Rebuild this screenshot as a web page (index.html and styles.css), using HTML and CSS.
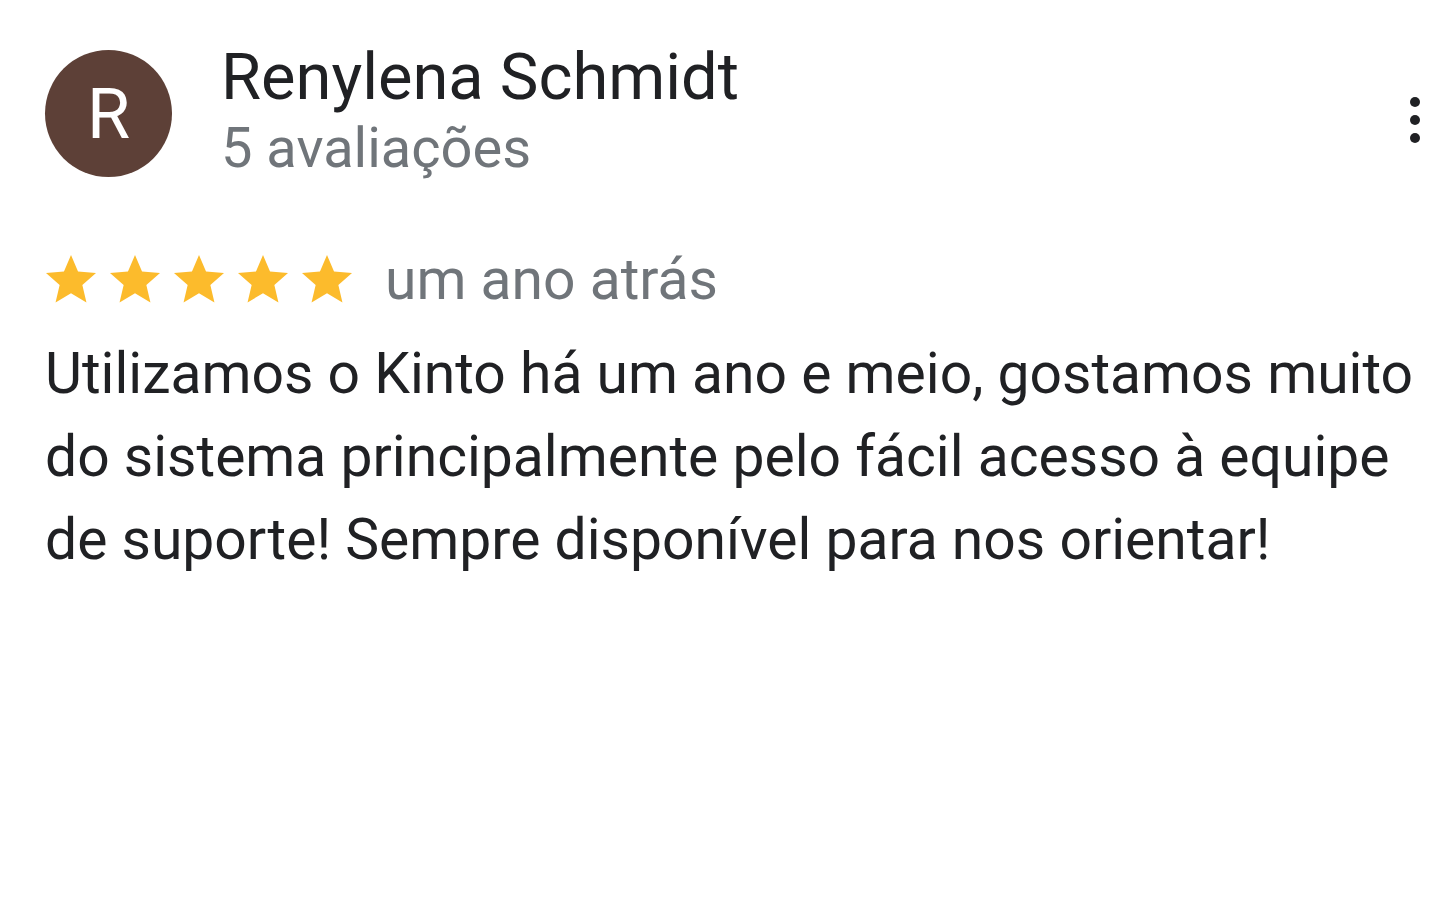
FILE: index.html
```html
<!DOCTYPE html>
<html lang="pt">
<head>
<meta charset="utf-8">
<link rel="stylesheet" href="styles.css">
</head>
<body>
<div class="review">
  <div class="header">
    <div class="avatar">R</div>
    <div class="author">
      <div class="name">Renylena Schmidt</div>
      <div class="count">5 avaliações</div>
    </div>
    <div class="menu">
      <span class="dot"></span><span class="dot"></span><span class="dot"></span>
    </div>
  </div>
  <div class="meta">
    <div class="stars">
      <svg class="star" viewBox="0 0 24 24"><path d="M12 17.27L18.18 21l-1.64-7.03L22 9.24l-7.19-.61L12 2 9.19 8.63 2 9.24l5.46 4.73L5.82 21z"/></svg>
      <svg class="star" viewBox="0 0 24 24"><path d="M12 17.27L18.18 21l-1.64-7.03L22 9.24l-7.19-.61L12 2 9.19 8.63 2 9.24l5.46 4.73L5.82 21z"/></svg>
      <svg class="star" viewBox="0 0 24 24"><path d="M12 17.27L18.18 21l-1.64-7.03L22 9.24l-7.19-.61L12 2 9.19 8.63 2 9.24l5.46 4.73L5.82 21z"/></svg>
      <svg class="star" viewBox="0 0 24 24"><path d="M12 17.27L18.18 21l-1.64-7.03L22 9.24l-7.19-.61L12 2 9.19 8.63 2 9.24l5.46 4.73L5.82 21z"/></svg>
      <svg class="star" viewBox="0 0 24 24"><path d="M12 17.27L18.18 21l-1.64-7.03L22 9.24l-7.19-.61L12 2 9.19 8.63 2 9.24l5.46 4.73L5.82 21z"/></svg>
    </div>
    <span class="date">um ano atrás</span>
  </div>
  <p class="text">Utilizamos o Kinto há um ano e meio, gostamos muito do sistema principalmente pelo fácil acesso à equipe de suporte! Sempre disponível para nos orientar!</p>
</div>
</body>
</html>
```

FILE: styles.css
```css
html, body {
  margin: 0;
  background: #ffffff;
}
body {
  font-family: Roboto, "Noto Sans", Arial, sans-serif;
  color: #202124;
}
.review {
  padding: 50px 19px 0 45px;
  width: 1439px;
  box-sizing: border-box;
}
.header {
  display: flex;
  align-items: flex-start;
  height: 129px;
}
.avatar {
  width: 127px;
  height: 127px;
  border-radius: 50%;
  background: #5d4037;
  color: #ffffff;
  font-size: 70px;
  line-height: 1;
  display: flex;
  align-items: center;
  justify-content: center;
  flex-shrink: 0;
}
.author {
  margin-left: 49px;
  flex: 1;
}
.name {
  font-size: 65px;
  line-height: 65px;
  margin-top: -5px;
  color: #202124;
}
.count {
  font-size: 56px;
  line-height: 60px;
  margin-top: 8px;
  color: #70757a;
}
.menu {
  display: flex;
  flex-direction: column;
  gap: 8px;
  margin-top: 47px;
  width: 10px;
}
.dot {
  width: 10px;
  height: 10px;
  border-radius: 50%;
  background: #202124;
}
.meta {
  display: flex;
  align-items: flex-start;
  margin: 71px 0 0 -4px;
  height: 60px;
}
.stars {
  display: flex;
  gap: 4px;
}
.star {
  width: 60px;
  height: 60px;
  fill: #fcbb2c;
  display: block;
}
.date {
  margin-left: 28px;
  font-size: 57px;
  line-height: 60px;
  color: #70757a;
}
.text {
  margin: 22px 0 0 0;
  font-size: 57px;
  line-height: 83px;
  color: #202124;
}
```
